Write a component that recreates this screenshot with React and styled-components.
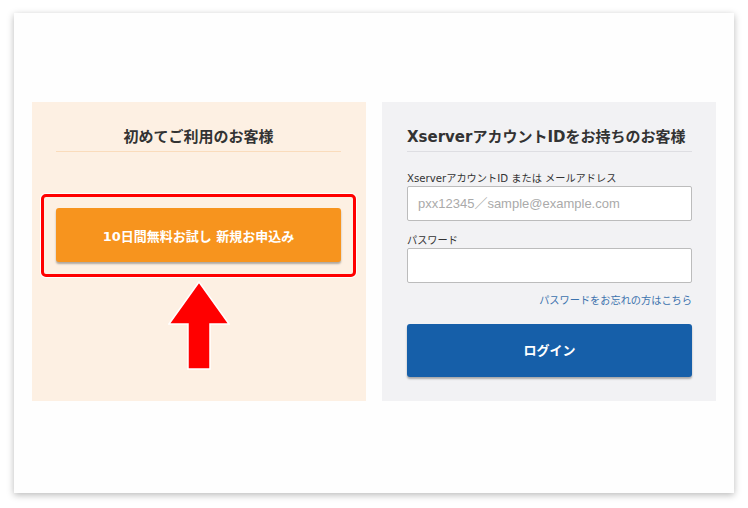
import React from 'react';
import styled, { createGlobalStyle } from 'styled-components';

const GlobalStyle = createGlobalStyle`
  html, body {
    margin: 0;
    padding: 0;
    background: #ffffff;
  }
  body {
    font-family: 'DejaVu Sans', 'Noto Sans CJK JP', sans-serif;
    color: #333333;
  }
`;

const Page = styled.div`
  width: 748px;
  height: 508px;
  padding: 13px 14px 0;
  box-sizing: border-box;
`;

const Card = styled.div`
  width: 720px;
  height: 480px;
  box-sizing: border-box;
  background: #fefefe;
  box-shadow: 0 2px 7px rgba(0, 0, 0, 0.28);
  padding: 89px 18px 0;
  display: grid;
  grid-template-columns: 334px 334px;
  column-gap: 16px;
  align-items: start;
`;

const Panel = styled.section`
  height: 299px;
  box-sizing: border-box;
  background: ${p => (p.tone === 'new' ? '#fdf0e3' : '#f2f2f4')};
  padding: ${p => (p.tone === 'new' ? '25px 25px 0 24px' : '25px 24px 0 25px')};
  display: flex;
  flex-direction: column;
`;

const PanelTitle = styled.h2`
  margin: 0;
  font-size: 15px;
  line-height: 20px;
  font-weight: bold;
  color: #333333;
  padding-bottom: 4px;
  text-align: ${p => p.align || 'left'};
  border-bottom: 1px solid ${p => (p.align === 'center' ? '#fadcbc' : '#dedee2')};
`;

const ButtonWrap = styled.div`
  position: relative;
  margin-top: 56px;
`;

const TrialButton = styled.button`
  display: block;
  width: 100%;
  height: 54px;
  border: none;
  border-radius: 3px;
  background: #f7941e;
  color: #ffffff;
  font-family: 'DejaVu Sans', 'Noto Sans CJK JP', sans-serif;
  font-size: 13px;
  font-weight: bold;
  box-shadow: 0 2px 2px rgba(0, 0, 0, 0.3);
`;

const Highlight = styled.div`
  position: absolute;
  top: -14px;
  left: -15px;
  right: -15px;
  bottom: -15px;
  border: 3px solid #ff0000;
  border-radius: 5px;
  box-shadow: 0 0 0 1px #ffffff;
  pointer-events: none;
`;

const Arrow = styled.svg`
  position: absolute;
  left: 50%;
  top: 73px;
  margin-left: -31px;
`;

const FieldLabel = styled.label`
  display: block;
  font-size: 10.2px;
  line-height: 14px;
  color: #333333;
  margin-top: ${p => p.top}px;
  margin-bottom: 0;
`;

const TextInput = styled.input`
  display: block;
  width: 100%;
  height: 35px;
  box-sizing: border-box;
  border: 1px solid #bcbcbc;
  border-radius: 2px;
  background: #ffffff;
  padding: 0 10px;
  font-family: 'Liberation Sans', 'Noto Sans CJK JP', sans-serif;
  font-size: 13px;
  color: #333333;
  &::placeholder {
    color: #aaaaaa;
  }
`;

const ForgotLink = styled.a`
  align-self: flex-end;
  margin-top: 11px;
  font-size: 10.2px;
  line-height: 14px;
  color: #3d73ae;
  text-decoration: none;
`;

const LoginButton = styled.button`
  display: block;
  width: 100%;
  height: 53px;
  margin-top: 16px;
  padding: 0 0 2px;
  border: none;
  border-radius: 3px;
  background: #165fa9;
  color: #ffffff;
  font-family: 'DejaVu Sans', 'Noto Sans CJK JP', sans-serif;
  font-size: 13px;
  font-weight: bold;
  box-shadow: 0 2px 2px rgba(0, 0, 0, 0.3);
`;

export default function App() {
  return (
    <Page>
      <GlobalStyle />
      <Card>
        <Panel tone="new">
          <PanelTitle align="center">初めてご利用のお客様</PanelTitle>
          <ButtonWrap>
            <TrialButton>10日間無料お試し 新規お申込み</TrialButton>
            <Highlight />
            <Arrow width="62" height="90" viewBox="0 0 62 90">
              <polygon
                points="31,1 1,43 20,43 20,88 42,88 42,43 61,43"
                fill="#ff0000"
                stroke="#ffffff"
                strokeWidth="1.5"
              />
            </Arrow>
          </ButtonWrap>
        </Panel>
        <Panel tone="member">
          <PanelTitle>XserverアカウントIDをお持ちのお客様</PanelTitle>
          <FieldLabel top={20}>XserverアカウントID または メールアドレス</FieldLabel>
          <TextInput placeholder="pxx12345／sample@example.com" />
          <FieldLabel top={13}>パスワード</FieldLabel>
          <TextInput type="password" />
          <ForgotLink href="#">パスワードをお忘れの方はこちら</ForgotLink>
          <LoginButton>ログイン</LoginButton>
        </Panel>
      </Card>
    </Page>
  );
}
